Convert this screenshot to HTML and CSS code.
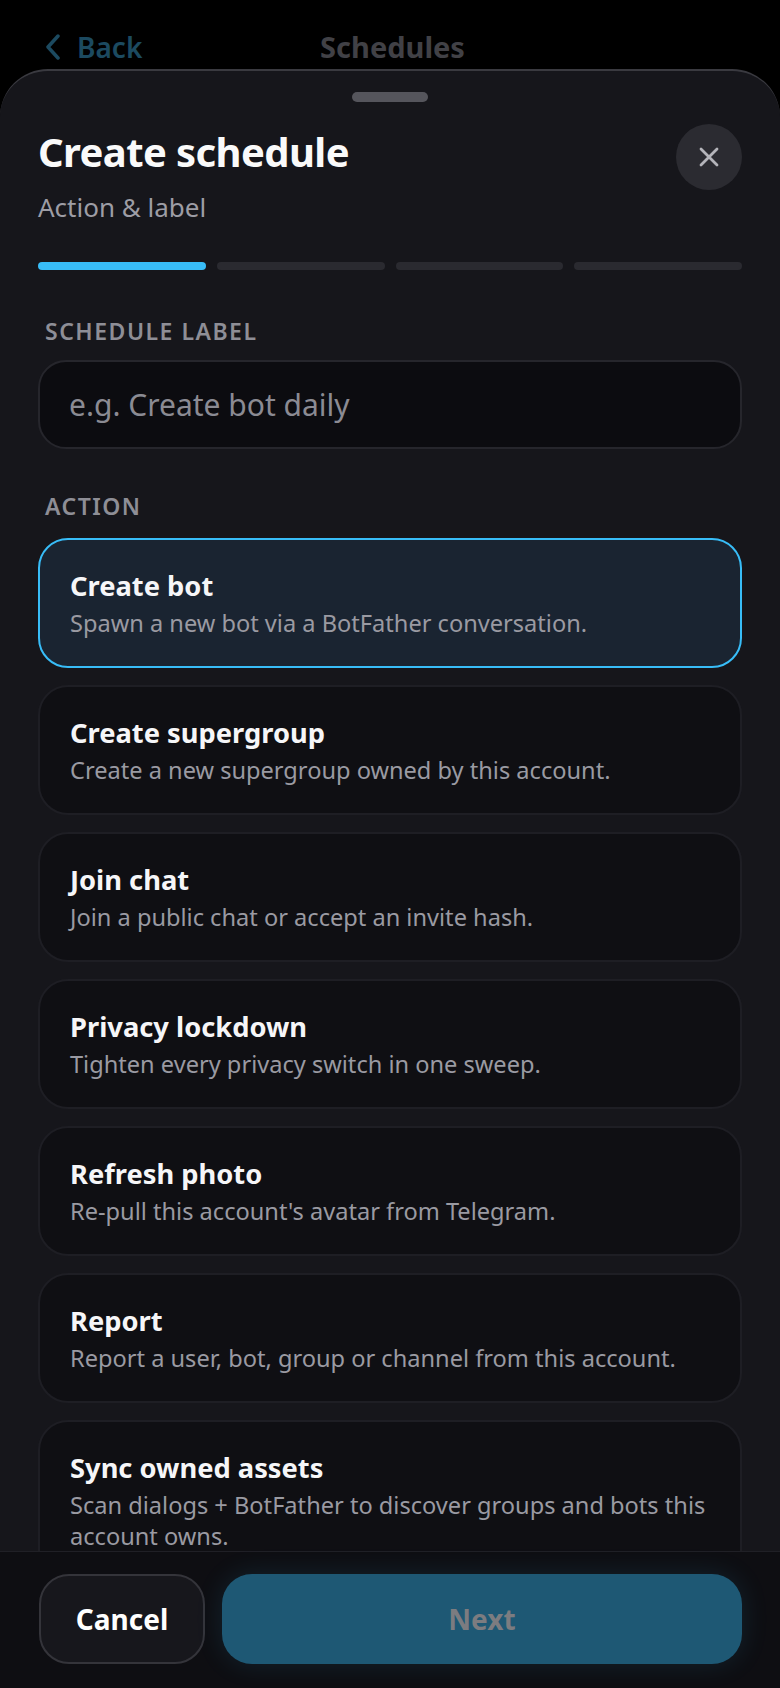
FILE: index.html
```html
<!DOCTYPE html>
<html lang="en">
<head>
  <meta charset="UTF-8" />
  <meta name="viewport" content="width=device-width, initial-scale=1.0" />
  <title>Create schedule</title>
  <link rel="stylesheet" href="styles.css">
</head>
<body>
  <div class="topbar">
    <a class="back-link" href="#">
      <svg class="back-icon" viewBox="0 0 16 26" width="16" height="26">
        <path d="M13 2 L3 13 L13 24" fill="none" stroke="currentColor" stroke-width="3.5" stroke-linecap="round" stroke-linejoin="round" />
      </svg>
      <span>Back</span>
    </a>
    <div class="topbar-title">Schedules</div>
    <div></div>
  </div>

  <div class="sheet">
    <div class="handle"></div>

    <div class="sheet-scroll">
      <div class="sheet-head">
        <div>
          <h1>Create schedule</h1>
          <p class="subtitle">Action &amp; label</p>
        </div>
        <button class="close-btn" aria-label="Close">
          <svg viewBox="0 0 20 20" width="20" height="20">
            <path d="M2 2 L18 18 M18 2 L2 18" stroke="currentColor" stroke-width="2.8" stroke-linecap="round" />
          </svg>
        </button>
      </div>

      <div class="steps">
        <span class="step active"></span>
        <span class="step"></span>
        <span class="step"></span>
        <span class="step"></span>
      </div>

      <label class="field-label" for="label-input">Schedule label</label>
      <input class="text-input" id="label-input" type="text" placeholder="e.g. Create bot daily" />

      <div class="field-label action-label">Action</div>
      <div class="action-list">
        <div class="action-card selected">
          <div class="action-title">Create bot</div>
          <div class="action-desc">Spawn a new bot via a BotFather conversation.</div>
        </div>
        <div class="action-card">
          <div class="action-title">Create supergroup</div>
          <div class="action-desc">Create a new supergroup owned by this account.</div>
        </div>
        <div class="action-card">
          <div class="action-title">Join chat</div>
          <div class="action-desc">Join a public chat or accept an invite hash.</div>
        </div>
        <div class="action-card">
          <div class="action-title">Privacy lockdown</div>
          <div class="action-desc">Tighten every privacy switch in one sweep.</div>
        </div>
        <div class="action-card">
          <div class="action-title">Refresh photo</div>
          <div class="action-desc">Re-pull this account's avatar from Telegram.</div>
        </div>
        <div class="action-card">
          <div class="action-title">Report</div>
          <div class="action-desc">Report a user, bot, group or channel from this account.</div>
        </div>
        <div class="action-card">
          <div class="action-title">Sync owned assets</div>
          <div class="action-desc">Scan dialogs + BotFather to discover groups and bots this account owns.</div>
        </div>
      </div>
    </div>

    <div class="sheet-foot">
      <button class="btn btn-cancel">Cancel</button>
      <button class="btn btn-next" disabled>Next</button>
    </div>
  </div>
</body>
</html>
```

FILE: styles.css
```css
body {
  margin: 0;
  background: #000;
  color: #f4f4f6;
  font-family: "Noto Sans", "Open Sans", sans-serif;
  height: 100vh;
  overflow: hidden;
  display: flex;
  flex-direction: column;
}
.topbar {
  height: 69px;
  box-sizing: border-box;
  padding: 25px 40px 0 45px;
  display: grid;
  grid-template-columns: 1fr auto 1fr;
  align-items: center;
  line-height: 40px;
}
.back-link {
  display: flex;
  align-items: center;
  gap: 16px;
  color: #1c4a60;
  text-decoration: none;
  font-size: 28px;
  font-weight: 600;
}
.topbar-title {
  color: #414146;
  font-size: 29px;
  font-weight: 700;
}
.sheet {
  flex: 1;
  min-height: 0;
  background: #16161b;
  border-top: 2px solid #3a3a40;
  border-radius: 48px 48px 0 0;
  display: flex;
  flex-direction: column;
  overflow: hidden;
}
.handle {
  width: 76px;
  height: 10px;
  border-radius: 5px;
  background: #55555c;
  margin: 21px auto 0;
  flex-shrink: 0;
}
.sheet-scroll {
  flex: 1;
  min-height: 0;
  overflow: hidden;
  padding: 22px 38px 0 38px;
}
.sheet-head {
  display: flex;
  justify-content: space-between;
  align-items: flex-start;
}
h1 {
  margin: 4px 0 0;
  font-size: 40px;
  line-height: 48px;
  font-weight: 700;
  letter-spacing: -0.6px;
  color: #fafafa;
}
.subtitle {
  margin: 13px 0 0;
  font-size: 26px;
  line-height: 36px;
  color: #9d9da5;
}
.close-btn {
  width: 66px;
  height: 66px;
  border-radius: 50%;
  border: none;
  background: #2b2b31;
  color: #b4b4ba;
  display: flex;
  align-items: center;
  justify-content: center;
  padding: 0;
  cursor: pointer;
}
.steps {
  display: grid;
  grid-template-columns: repeat(4, 1fr);
  gap: 11px;
  margin-top: 37px;
}
.step {
  height: 8px;
  border-radius: 4px;
  background: #2a2a30;
}
.step.active {
  background: #38bdf8;
}
.field-label {
  display: block;
  margin-top: 45px;
  padding-left: 7px;
  font-size: 23px;
  line-height: 32px;
  font-weight: 600;
  letter-spacing: 1.5px;
  text-transform: uppercase;
  color: #8e8e96;
}
.text-input {
  display: block;
  margin-top: 13px;
  width: 100%;
  height: 89px;
  box-sizing: border-box;
  border: 2px solid #26262c;
  border-radius: 28px;
  background: #0c0c10;
  padding: 0 29px;
  font-family: inherit;
  font-size: 30px;
  color: #f4f4f6;
  outline: none;
}
.text-input::placeholder {
  color: #8b8b93;
}
.action-label {
  margin-top: 41px;
}
.action-list {
  display: flex;
  flex-direction: column;
  gap: 17px;
  margin-top: 16px;
}
.action-card {
  background: #0f0f13;
  border: 2px solid #1e1e24;
  border-radius: 30px;
  padding: 28px 26px 27px 30px;
}
.action-card.selected {
  background: #1a2431;
  border-color: #38bdf8;
}
.action-title {
  font-size: 27.3px;
  line-height: 36px;
  font-weight: 700;
  color: #f6f6f8;
}
.action-desc {
  margin-top: 4px;
  font-size: 23.6px;
  line-height: 31px;
  color: #9a9aa2;
}
.sheet-foot {
  flex-shrink: 0;
  display: flex;
  gap: 17px;
  padding: 22px 38px 24px 39px;
  border-top: 1px solid #202026;
  background: #0e0e12;
}
.btn {
  height: 90px;
  border-radius: 30px;
  font-family: inherit;
  font-size: 28px;
  font-weight: 700;
  cursor: pointer;
}
.btn-cancel {
  width: 166px;
  background: #17171c;
  border: 2px solid #34343a;
  color: #fff;
}
.btn-next {
  flex: 1;
  background: #1e5874;
  border: none;
  color: #7c7c80;
  box-shadow: 0 0 28px rgba(56, 189, 248, 0.12);
}
```
